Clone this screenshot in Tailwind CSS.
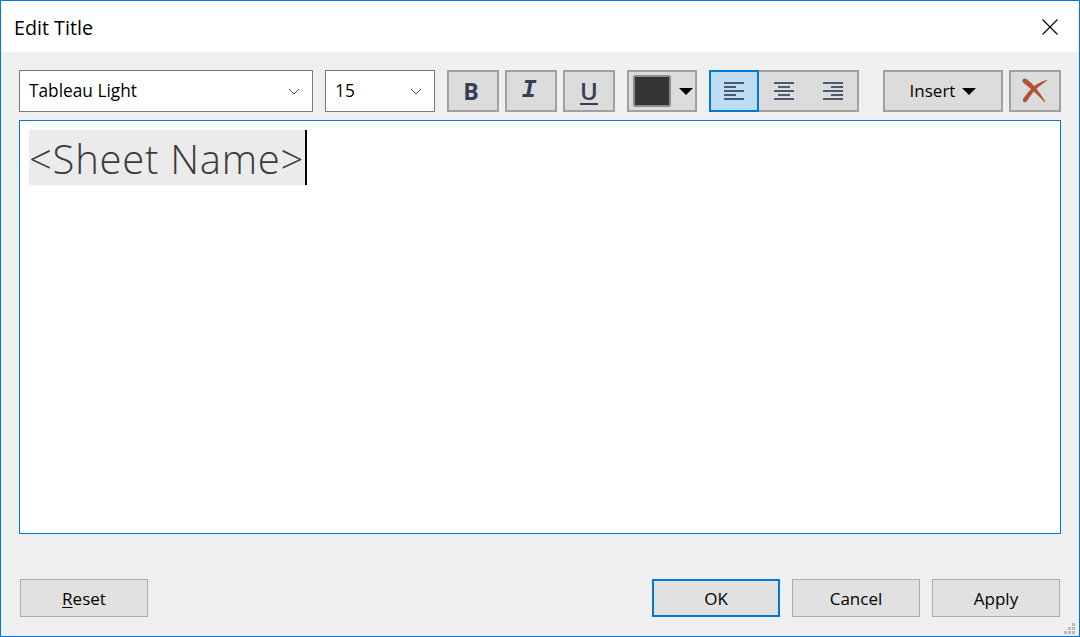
<!DOCTYPE html>
<html lang="en">

<head>
    <meta charset="UTF-8">
    <title>Edit Title</title>
    <script src="https://cdn.jsdelivr.net/npm/@tailwindcss/browser@4"></script>
</head>

<body class="bg-white font-['Open_Sans',sans-serif] text-black">
    <div class="relative w-[1080px] h-[637px] border border-[#0078d7] flex flex-col overflow-hidden">
        <!-- Title bar -->
        <header class="h-[51px] shrink-0 bg-white flex items-center justify-between pl-[13px] pr-[20px]">
            <h1 class="text-[19.7px] leading-none pt-[2px]">Edit Title</h1>
            <svg width="18" height="18" viewBox="0 0 18 18" class="stroke-black" fill="none">
                <path d="M1.5 1.5 L16.5 16.5 M16.5 1.5 L1.5 16.5" stroke-width="1.1" />
            </svg>
        </header>

        <main class="flex-1 bg-[#efefef] flex flex-col pl-[18px] pr-[18px] pt-[18px]">
            <!-- Toolbar -->
            <div class="flex h-[42px] shrink-0">
                <div class="w-[294px] bg-white border border-[#7a7a7a] flex items-center justify-between pl-[9px] pr-[12px] text-[17.3px]">
                    <span>Tableau Light</span>
                    <svg width="12" height="7" viewBox="0 0 12 7" fill="none" class="stroke-[#555]"><path d="M1 1 L6 6 L11 1" stroke-width="1" /></svg>
                </div>
                <div class="w-[110px] ml-[12px] bg-white border border-[#7a7a7a] flex items-center justify-between pl-[9px] pr-[12px] text-[17.3px]">
                    <span>15</span>
                    <svg width="12" height="7" viewBox="0 0 12 7" fill="none" class="stroke-[#555]"><path d="M1 1 L6 6 L11 1" stroke-width="1" /></svg>
                </div>

                <button class="w-[52px] ml-[12px] bg-[#dcdcdc] border-2 border-[#a0a0a0] flex items-center justify-center pr-[4px] text-[23px] font-bold text-[#333f55]">B</button>
                <button class="w-[52px] ml-[6px] bg-[#dcdcdc] border-2 border-[#a0a0a0] flex items-center justify-center pr-[4px] font-['Liberation_Mono',monospace] text-[25px] font-bold italic text-[#333f55]">I</button>
                <button class="w-[52px] ml-[6px] bg-[#dcdcdc] border-2 border-[#a0a0a0] flex items-center justify-center text-[24px] font-semibold underline underline-offset-[3px] text-[#333f55]">U</button>

                <button class="w-[70px] ml-[12px] bg-[#dcdcdc] border-2 border-[#a0a0a0] flex items-center pl-[4px]">
                    <span class="w-[38px] h-[32px] bg-[#333333] border-2 border-[#8c8c8c] rounded-[2px]"></span>
                    <svg width="14" height="7" viewBox="0 0 14 7" class="ml-[8px] mt-[1px]"><path d="M0 0 H14 L7 7 Z" fill="#000" /></svg>
                </button>

                <div class="w-[150px] ml-[12px] flex bg-[#dcdcdc] border-2 border-l-0 border-[#a0a0a0]">
                    <button class="w-[50px] -my-[2px] bg-[#bfdcf5] border-2 border-[#0078d7] flex items-center justify-center">
                        <svg width="20" height="18" viewBox="0 0 20 18" fill="#4a5a72"><rect y="0" width="20" height="2" /><rect y="4" width="12" height="2" /><rect y="8" width="20" height="2" /><rect y="12" width="12" height="2" /><rect y="16" width="20" height="2" /></svg>
                    </button>
                    <div class="w-[50px] flex items-center justify-center">
                        <svg width="20" height="18" viewBox="0 0 20 18" fill="#4a5a72"><rect y="0" width="20" height="2" /><rect x="4" y="4" width="12" height="2" /><rect y="8" width="20" height="2" /><rect x="4" y="12" width="12" height="2" /><rect y="16" width="20" height="2" /></svg>
                    </div>
                    <div class="flex-1 flex items-center justify-center">
                        <svg width="20" height="18" viewBox="0 0 20 18" fill="#4a5a72"><rect y="0" width="20" height="2" /><rect x="8" y="4" width="12" height="2" /><rect y="8" width="20" height="2" /><rect x="8" y="12" width="12" height="2" /><rect y="16" width="20" height="2" /></svg>
                    </div>
                </div>

                <button class="w-[120px] ml-[24px] bg-[#dcdcdc] border-2 border-[#a0a0a0] flex items-center justify-center text-[17px]">
                    Insert
                    <svg width="14" height="7" viewBox="0 0 14 7" class="ml-[7px] mt-[1px]"><path d="M0 0 H14 L7 7 Z" fill="#000" /></svg>
                </button>

                <button class="w-[52px] ml-[6px] bg-[#dcdcdc] border-2 border-[#a0a0a0] flex items-center justify-center">
                    <svg width="28" height="28" viewBox="0 0 28 28" fill="#b05333">
                        <path d="M1.5 3 Q2.5 0.5 5.5 2 Q14 8 24 24 Q25 25.5 23.5 25 Q12 13 2.5 6 Q1 5 1.5 3Z" />
                        <path d="M27 2.5 Q18 5 12 10 Q6 16 2 22 Q1.5 25 4 25.5 Q6 25 8 21 Q13 13 20 8 Q25 4.5 27 2.5Z" />
                    </svg>
                </button>
            </div>

            <!-- Editor -->
            <div class="mt-[8px] h-[414px] shrink-0 bg-white border border-[#0078d7] pl-[9px] pt-[9px]">
                <div class="flex h-[55px]">
                    <span class="bg-[#ebebeb] w-[276px] text-[#3a3a3a] text-[40px] tracking-[0.75px] font-light leading-[58px] whitespace-nowrap">&lt;Sheet Name&gt;</span>
                    <span class="w-[2px] bg-black"></span>
                </div>
            </div>

            <!-- Footer buttons -->
            <div class="mt-[45px] h-[38px] flex text-[17px] pl-[1px]">
                <button class="w-[128px] pt-[1px] bg-[#e1e1e1] border border-[#adadad]"><span class="underline underline-offset-2">R</span>eset</button>
                <button class="w-[128px] pt-[1px] ml-auto bg-[#e1e1e1] border-2 border-[#0078d7]">OK</button>
                <button class="w-[128px] pt-[1px] ml-[12px] bg-[#e1e1e1] border border-[#adadad]">Cancel</button>
                <button class="w-[128px] pt-[1px] ml-[12px] mr-[1px] bg-[#e1e1e1] border border-[#adadad]">Apply</button>
            </div>
        </main>

        <!-- Resize grip -->
        <svg width="11" height="11" viewBox="0 0 11 11" fill="#bbbbbb" class="absolute right-[4px] bottom-[2px]">
            <rect x="8" y="0" width="3" height="3" /><rect x="4" y="4" width="3" height="3" /><rect x="8" y="4" width="3" height="3" /><rect x="0" y="8" width="3" height="3" /><rect x="4" y="8" width="3" height="3" /><rect x="8" y="8" width="3" height="3" />
        </svg>
    </div>
</body>

</html>
